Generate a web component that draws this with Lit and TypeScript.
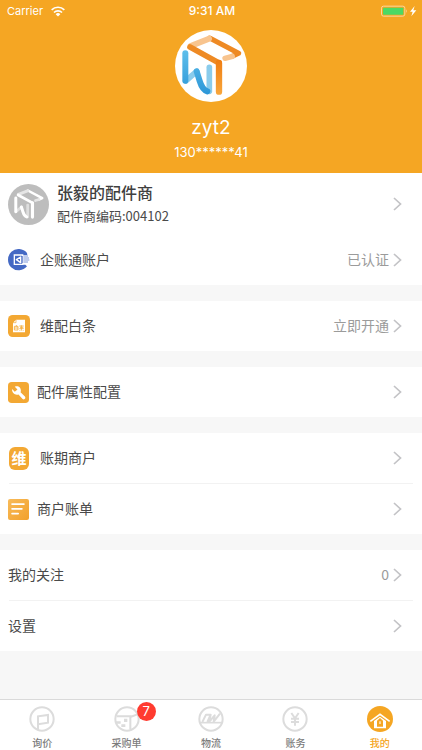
import { LitElement, html, svg, css, nothing, TemplateResult } from "lit";
import { customElement, property } from "lit/decorators.js";

/* ---------- icons ---------- */

const cubeStrokes = (c: Record<string, string>) => svg`
  <g fill="none" stroke-linejoin="round" stroke-linecap="round">
    <path d="M134 44 L221 90 L204 98" stroke=${c.top} stroke-width="15"/>
    <path d="M202 99 L180 105" stroke=${c.topLight} stroke-width="16"/>
    <path d="M77 68 L132 46" stroke=${c.topLight} stroke-width="18"/>
    <path d="M75 71 L162 119" stroke=${c.top} stroke-width="17"/>
    <path d="M162 119 V205" stroke=${c.stem} stroke-width="19"/>
    <path d="M62 173 L95 144" stroke=${c.leftLight} stroke-width="17"/>
    <path d="M133 204 V132" stroke=${c.leftLight} stroke-width="17"/>
    <path d="M61 90 V172" stroke=${c.left} stroke-width="18"/>
    <path d="M95 144 L104 173 Q112 199 127 204" stroke=${c.left} stroke-width="18"/>
  </g>`;

const brandLogo = html`<svg viewBox="30 20 216 216" aria-hidden="true">
  <defs>
    <linearGradient id="stem" x1="0" y1="110" x2="0" y2="210" gradientUnits="userSpaceOnUse">
      <stop offset="0" stop-color="#ef7d12"/><stop offset="1" stop-color="#f8a53a"/>
    </linearGradient>
    <linearGradient id="left" x1="0" y1="85" x2="0" y2="210" gradientUnits="userSpaceOnUse">
      <stop offset="0" stop-color="#5cbdea"/><stop offset="1" stop-color="#2e98d8"/>
    </linearGradient>
  </defs>
  <circle cx="138" cy="128" r="108" fill="#fff"/>
  ${cubeStrokes({ top: "#ee8a24", topLight: "#f8c48e", stem: "url(#stem)", left: "url(#left)", leftLight: "#8accec" })}
</svg>`;

const shopLogo = html`<svg viewBox="30 20 216 216" aria-hidden="true">
  <circle cx="138" cy="128" r="108" fill="#bdbdbd"/>
  <g transform="translate(18 16) scale(.87)">
    ${cubeStrokes({ top: "#fff", topLight: "#e6e6e6", stem: "#fff", left: "#fff", leftLight: "#dedede" })}
  </g>
</svg>`;

const accountIcon = html`<svg viewBox="0 0 66 66" width="22" height="22" aria-hidden="true">
  <path d="M57 12 A32 32 0 1 0 57 52 L52 47 H44 V18 H58 Z" fill="#4469c4"/>
  <path d="M44 21 V18 H19 V46 H44 V43" fill="none" stroke="#fff" stroke-width="4"/>
  <path d="M38 24 L25 32 L38 41 Z" fill="none" stroke="#fff" stroke-width="4" stroke-linejoin="round"/>
  <path d="M46 21 H60 M46 27 H63 M46 33 H64 M46 39 H60" stroke="#7f99da" stroke-width="3"/>
</svg>`;

const creditIcon = html`<svg viewBox="0 0 66 66" width="22" height="22" aria-hidden="true">
  <rect width="66" height="66" rx="14" fill="#f3a833"/>
  <path d="M24 14 H51 V52 H15 V23 Z" fill="#fff"/>
  <path d="M15 23 H24 V14" fill="none" stroke="#f3a833" stroke-width="2"/>
  <g fill="none" stroke="#f3a833" stroke-width="2.4">
    <path d="M19 34 H30 V45 H19 Z M19 39 H30 M25 34 V30 M34 33 H47 M36 37 H46 M34 41 H47 M40 31 V47 M36 46 L34 48 M45 46 L47 48"/>
  </g>
</svg>`;

const wrenchIcon = html`<svg viewBox="0 0 62 62" width="21" height="21" aria-hidden="true">
  <rect width="62" height="62" rx="11" fill="#f3a833"/>
  <path d="M20 14 C30 10 39 17 38 27 L37 30 L50 43 C54 48 48 54 43 50 L31 37 C21 40 11 33 12 21 L20 29 L28 22 Z" fill="#fff"/>
</svg>`;

const billIcon = html`<svg viewBox="0 0 62 62" width="21" height="21" aria-hidden="true">
  <defs><linearGradient id="bill" x1="0" y1="0" x2="1" y2="1">
    <stop offset="0" stop-color="#f8bb5a"/><stop offset="1" stop-color="#f2a02a"/>
  </linearGradient></defs>
  <rect width="62" height="62" rx="6" fill="url(#bill)"/>
  <path d="M12 15 H47 M12 29 H41 M12 43 H30" stroke="#fff" stroke-width="5" stroke-linecap="round"/>
</svg>`;

const memberIcon = html`<span class="char-icon" aria-hidden="true">维</span>`;

const chevron = html`<svg class="chevron" viewBox="0 0 9 14" width="9" height="14" aria-hidden="true">
  <path d="M1 1 L7.5 7 L1 13" fill="none" stroke="#c3c3c6" stroke-width="1.7"/>
</svg>`;

const tabFrame = (inner: TemplateResult) => html`<svg viewBox="0 0 78 78" width="26" height="26" aria-hidden="true">
  <circle cx="39" cy="39" r="35" fill="none" stroke="#dcdcdc" stroke-width="6"/>${inner}
</svg>`;

const inquiryTab = tabFrame(svg`<path d="M27 72 V31 L57 27 V50 L27 55" fill="none" stroke="#dcdcdc" stroke-width="6"/>`);
const purchaseTab = tabFrame(svg`
  <path d="M8 31 H49 V70 M49 33 L70 25" fill="none" stroke="#dcdcdc" stroke-width="6"/>
  <path d="M30 38 H40 V48 H30 Z M6 46 H20 V53 H6 Z M22 55 H34 V63 H22 Z" fill="#dcdcdc"/>`);
const logisticsTab = tabFrame(svg`
  <path d="M7 50 H71" stroke="#dcdcdc" stroke-width="5"/>
  <path d="M13 48 L24 26 H38 L28 48 M38 26 L33 48 L50 28 L47 47 L66 23" fill="none" stroke="#dcdcdc" stroke-width="6" stroke-linejoin="round"/>`);
const financeTab = tabFrame(svg`
  <path d="M28 21 L39 37 L50 21 M39 36 V59 M27 38 H51 M27 48 H51" fill="none" stroke="#dcdcdc" stroke-width="6"/>`);
const mineTab = html`<svg viewBox="0 0 78 78" width="26" height="26" aria-hidden="true">
  <circle cx="39" cy="39" r="39" fill="#f5a623"/>
  <path d="M10 46 L39 25 L68 46" fill="none" stroke="#fff" stroke-width="5"/>
  <path d="M21 45 L39 32 L57 45 V67 H21 Z" fill="#fff"/>
  <path d="M30 62 V44 L39 36 L48 44 V62 Z" fill="#f5a623"/>
  <path d="M36 46 H42 V54 H36 Z" fill="#fff" opacity=".55"/>
</svg>`;

/* ---------- row ---------- */

@customElement("menu-row")
export class MenuRow extends LitElement {
  @property() label = "";
  @property() value = "";
  @property({ type: Boolean }) wide = false;
  @property({ attribute: false }) icon?: TemplateResult;

  static styles = css`
    :host { display: block; }
    button {
      display: flex; align-items: center; width: 100%; height: 50px;
      margin: 0; padding: 0 20px 0 8px; border: 0; background: none;
      font: inherit; color: #4a4a4a; text-align: left; cursor: pointer;
    }
    .icon { display: flex; margin-right: 8px; }
    .icon.wide { width: 22px; justify-content: center; margin-right: 10px; }
    .label { flex: 1; padding-bottom: 2px; }
    .value { color: #9b9b9b; margin-right: 4px; padding-bottom: 2px; }
    .chevron { flex: none; }
    .char-icon {
      display: flex; align-items: center; justify-content: center;
      width: 20px; height: 23px; border-radius: 6px;
      background: #f3a833; color: #fff; font-size: 15px; font-weight: 700; line-height: 20px;
    }
  `;

  render() {
    return html`<button type="button">
      ${this.icon ? html`<span class="icon ${this.wide ? "wide" : ""}">${this.icon}</span>` : nothing}
      <span class="label">${this.label}</span>
      ${this.value ? html`<span class="value">${this.value}</span>` : nothing}
      ${chevron}
    </button>`;
  }
}

/* ---------- page ---------- */

interface Tab { label: string; icon: TemplateResult; badge?: number; active?: boolean }

const tabs: Tab[] = [
  { label: "询价", icon: inquiryTab },
  { label: "采购单", icon: purchaseTab, badge: 7 },
  { label: "物流", icon: logisticsTab },
  { label: "账务", icon: financeTab },
  { label: "我的", icon: mineTab, active: true },
];

@customElement("app-root")
export class AppRoot extends LitElement {
  static styles = css`
    :host {
      display: flex; flex-direction: column; min-height: 100vh;
      background: #f7f7f7; color: #4a4a4a;
      font: 14px/20px "Noto Sans CJK SC", sans-serif;
    }
    header { background: #f5a623; color: #fff; padding-bottom: 11px; }
    .status {
      display: grid; grid-template-columns: 1fr auto 1fr; align-items: center;
      height: 22px; padding: 0 5px 0 7px;
      font: 11px/14px Inter, sans-serif;
    }
    .carrier { display: flex; align-items: center; gap: 8px; }
    .time { font-size: 12px; font-weight: 500; }
    .battery { justify-self: end; display: flex; }
    .profile { display: flex; flex-direction: column; align-items: center; padding-top: 8px; }
    .avatar { width: 72px; height: 72px; }
    .avatar svg, .shop-avatar svg { display: block; width: 100%; height: 100%; }
    h1 { margin: 12px 0 0; font: 400 19px/28px Inter, sans-serif; }
    .phone { margin: 0; font: 13px/20px Inter, sans-serif; }
    main { flex: 1; display: flex; flex-direction: column; gap: 16px; }
    section { background: #fff; }
    .shop {
      display: flex; align-items: center; width: 100%; height: 62px;
      margin: 0; padding: 0 20px 0 8px; border: 0; background: none;
      font: inherit; color: inherit; text-align: left; cursor: pointer;
    }
    .shop-avatar { width: 41px; height: 41px; margin-right: 8px; }
    .shop-text { flex: 1; display: flex; flex-direction: column; }
    .shop-name { font-size: 16px; line-height: 24px; font-weight: 500; color: #404040; }
    .shop-code { font-size: 13px; line-height: 24px; }
    hr { margin: 0 9px; border: 0; border-top: 1px solid #f2f2f2; }
    nav {
      position: sticky; bottom: 0; display: flex; height: 50px;
      background: #fff; border-top: 1px solid #dadada;
    }
    nav a {
      flex: 1; display: flex; flex-direction: column; align-items: center;
      padding-top: 6px; gap: 4px; color: #7c7c7c; text-decoration: none;
      font-size: 10px; line-height: 14px; font-weight: 500;
    }
    nav a.active { color: #f5a623; }
    .tab-icon { position: relative; display: flex; }
    .badge {
      position: absolute; left: 23px; top: -4px; width: 19px; height: 19px;
      border-radius: 50%; background: #ff3b30; color: #fff;
      font: 13px/19px Inter, sans-serif; text-align: center;
    }
  `;

  render() {
    return html`
      <header>
        <div class="status">
          <span class="carrier">Carrier
            <svg viewBox="0 0 42 32" width="14" height="11" aria-hidden="true">
              <path d="M2 11 A27 27 0 0 1 40 11" fill="none" stroke="#fff" stroke-width="5"/>
              <path d="M9 19 A17 17 0 0 1 33 19" fill="none" stroke="#fff" stroke-width="5"/>
              <path d="M14 24 A10 10 0 0 1 28 24 L21 31 Z" fill="#fff"/>
            </svg>
          </span>
          <span class="time">9:31 AM</span>
          <svg class="battery" viewBox="0 0 108 36" width="36" height="12" aria-label="充电中">
            <rect x="1.5" y="3.5" width="70" height="30" rx="6" fill="none" stroke="#fbd79b" stroke-width="3"/>
            <rect x="6" y="8" width="61" height="21" rx="2" fill="#4cd964"/>
            <path d="M75 13 Q80 18 75 24 Z" fill="#fbd79b"/>
            <path d="M101 3 L87 20 H95 L91 34 L106 16 H97 Z" fill="#fff"/>
          </svg>
        </div>
        <div class="profile">
          <div class="avatar">${brandLogo}</div>
          <h1>zyt2</h1>
          <p class="phone">130******41</p>
        </div>
      </header>
      <main>
        <section>
          <button class="shop" type="button">
            <span class="shop-avatar">${shopLogo}</span>
            <span class="shop-text">
              <span class="shop-name">张毅的配件商</span>
              <span class="shop-code">配件商编码:004102</span>
            </span>
            ${chevron}
          </button>
          <menu-row wide label="企账通账户" value="已认证" .icon=${accountIcon}></menu-row>
        </section>
        <section><menu-row wide label="维配白条" value="立即开通" .icon=${creditIcon}></menu-row></section>
        <section><menu-row label="配件属性配置" .icon=${wrenchIcon}></menu-row></section>
        <section>
          <menu-row wide label="账期商户" .icon=${memberIcon}></menu-row>
          <hr>
          <menu-row label="商户账单" .icon=${billIcon}></menu-row>
        </section>
        <section>
          <menu-row label="我的关注" value="0"></menu-row>
          <hr>
          <menu-row label="设置"></menu-row>
        </section>
      </main>
      <nav>
        ${tabs.map(t => html`<a href="#" class=${t.active ? "active" : ""}>
          <span class="tab-icon">${t.icon}${t.badge ? html`<span class="badge">${t.badge}</span>` : nothing}</span>
          <span>${t.label}</span>
        </a>`)}
      </nav>`;
  }
}
